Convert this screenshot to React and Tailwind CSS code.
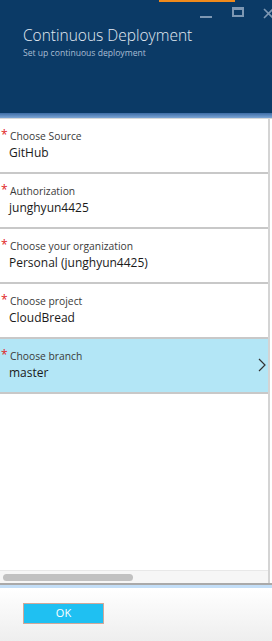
export default function App() {
  const rows = [
    ["Choose Source", "GitHub"],
    ["Authorization", "junghyun4425"],
    ["Choose your organization", "Personal (junghyun4425)"],
    ["Choose project", "CloudBread"],
  ];
  return (
    <div className="w-[272px] h-[641px] flex flex-col bg-white overflow-hidden" style={{ fontFamily: '"Open Sans", "Noto Sans", sans-serif' }}>
      <div className="relative h-[113px] shrink-0 bg-[#0b3a66] pl-[23px] pt-[25px]">
        <div className="absolute top-0 left-[159px] w-[76px] h-[2px] bg-[#f08a1c]" />
        <div className="absolute top-[16px] left-[200px] w-[12px] h-[2px] bg-[#7d97b3]" />
        <div className="absolute top-[7px] left-[232px] w-[12px] h-[10px] border-2 border-t-[3px] border-[#7d97b3]" />
        <svg className="absolute top-[8px] left-[263px]" width="10" height="11" viewBox="0 0 10 11">
          <path d="M1 1 L10 10 M10 1 L1 10" stroke="#7d97b3" strokeWidth="1.6" />
        </svg>
        <div className="text-[15.5px] font-light leading-[21px] text-[#e4ebf3]">Continuous Deployment</div>
        <div className="text-[8.6px] leading-[12px] text-[#a9bdd3] mt-[1px]">Set up continuous deployment</div>
      </div>
      <div className="h-[5px] shrink-0 bg-gradient-to-b from-[#3d6ca5] to-[#7ea7d6]" />
      <div className="h-[1px] shrink-0 bg-[#d8d8d8]" />
      <div className="flex-1 flex flex-col w-[270px] border-r-2 border-[#d4d4d4]">
        {rows.map(([l, v]) => (
          <div key={l} className="h-[55px] border-b-2 border-[#c8c8c8] pt-[10px] relative">
            <span className="absolute left-[1px] top-[10px] text-[12px] text-[#e02020] leading-[12px]">*</span>
            <div className="pl-[10px] text-[10.3px] leading-[14px] text-[#3a3a3a]">{l}</div>
            <div className="pl-[9px] text-[12px] leading-[18px] mt-[1px] text-[#1a1a1a]">{v}</div>
          </div>
        ))}
        <div className="h-[55px] border-b-2 border-[#c8c8c8] pt-[10px] relative bg-[#b3e6f6]">
          <span className="absolute left-[1px] top-[10px] text-[12px] text-[#e02020] leading-[12px]">*</span>
          <div className="pl-[10px] text-[10.3px] leading-[14px] text-[#3a3a3a]">Choose branch</div>
          <div className="pl-[9px] text-[12px] leading-[18px] mt-[1px] text-[#1a1a1a]">master</div>
          <svg className="absolute right-[2px] top-[19px]" width="8" height="14" viewBox="0 0 8 14">
            <path d="M1 1 L7 7 L1 13" stroke="#333" strokeWidth="1.2" fill="none" />
          </svg>
        </div>
        <div className="flex-1" />
        <div className="h-[13px] bg-[#f6f6f6] border-t border-[#e8e8e8] flex items-center pl-[3px]">
          <div className="w-[130px] h-[7px] rounded-full bg-[#c1c1c1]" />
        </div>
      </div>
      <div className="h-[2px] shrink-0 bg-[#a9a9a9]" />
      <div className="h-[3px] shrink-0 bg-[#c3def7]" />
      <div className="h-[53px] shrink-0 bg-gradient-to-b from-white to-[#eeeeee] pl-[23px] pt-[15px]">
        <div className="w-[81px] h-[21px] bg-[#1fc0f2] border border-[#d0a89a] flex items-center justify-center text-white text-[11px]">OK</div>
      </div>
    </div>
  );
}
